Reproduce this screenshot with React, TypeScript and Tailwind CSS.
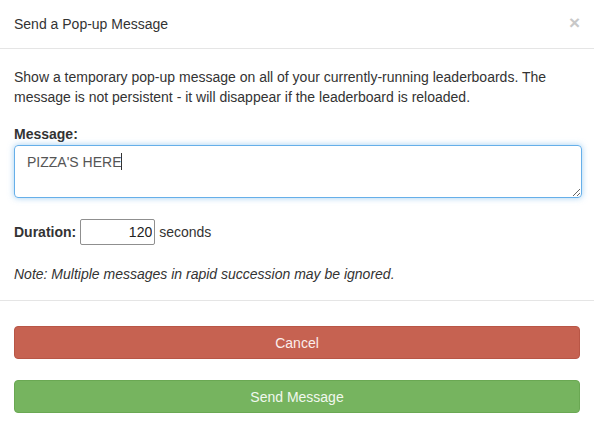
import React from 'react';

export default function App() {
  return (
    <div className="w-[594px] h-[427px] bg-white text-[#333] text-[14px] font-['Liberation_Sans',Arial,sans-serif] leading-[20px] overflow-hidden">
      {/* Header */}
      <div className="h-[49px] px-[14px] flex items-center justify-between border-b border-[#e5e5e5]">
        <h4 className="text-[14px] -mt-[1px]">Send a Pop-up Message</h4>
        <button className="text-[19px] font-bold leading-none text-[#c8c8c8] mr-0 -mt-[4px]">×</button>
      </div>

      {/* Body */}
      <div className="px-[14px] pt-[18px] pb-[16px] border-b border-[#e5e5e5]">
        <p>
          Show a temporary pop-up message on all of your currently-running leaderboards. The
          message is not persistent - it will disappear if the leaderboard is reloaded.
        </p>

        <label className="block font-bold mt-[17px]">Message:</label>
        <div className="relative mt-[1px]">
          <textarea
            defaultValue="PIZZA'S HERE"
            className="block w-[568px] h-[53px] rounded-[4px] border border-[#66afe9] px-[12px] py-[6px] text-[14px] text-[#555] leading-[20px] outline-none shadow-[0_0_6px_rgba(102,175,233,0.6)]"
          />
          <span className="absolute left-[107px] top-[8px] w-px h-[17px] bg-[#333]" />
        </div>

        <div className="flex items-center mt-[21px]">
          <span className="font-bold">Duration:</span>
          <input
            defaultValue="120"
            className="ml-[4px] w-[75px] h-[26px] border border-[#8f8f8f] rounded-[2px] text-right pr-[2px] text-[14px] text-[#222] outline-none"
          />
          <span className="ml-[4px]">seconds</span>
        </div>

        <p className="italic mt-[19px]">Note: Multiple messages in rapid succession may be ignored.</p>
      </div>

      {/* Footer */}
      <div className="px-[14px] pt-[25px] flex flex-col gap-[21px]">
        <button className="h-[33px] w-full rounded-[4px] bg-[#c66251] border border-[#b85646] text-[#fbeeec] text-[14px]">
          Cancel
        </button>
        <button className="h-[33px] w-full rounded-[4px] bg-[#76b45f] border border-[#6aa853] text-[#f1f8ee] text-[14px]">
          Send Message
        </button>
      </div>
    </div>
  );
}
